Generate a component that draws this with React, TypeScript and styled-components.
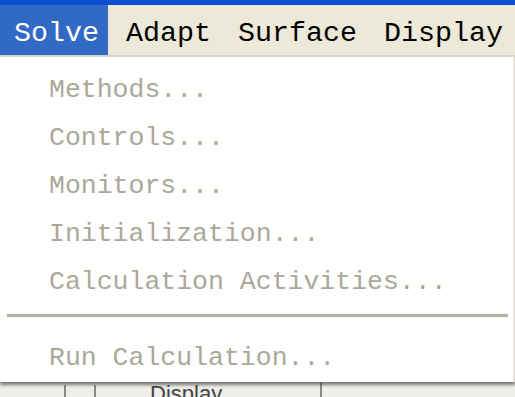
import React from "react";
import styled, { createGlobalStyle } from "styled-components";

const Global = createGlobalStyle`
  html, body { margin: 0; padding: 0; background: #ffffff; overflow: hidden; }
  #root { width: 515px; height: 397px; }
`;

const Page = styled.div`
  width: 515px;
  height: 397px;
  display: flex;
  flex-direction: column;
  overflow: hidden;
  background: #f2f2ee;
`;

const TitleEdge = styled.div`
  height: 5px;
  flex: none;
  background: #0b4fd1;
`;

const MenuBar = styled.div`
  height: 50px;
  flex: none;
  display: flex;
  align-items: stretch;
  background: #ece9d8;
  border-bottom: 2px solid #d8d5c8;
`;

const MenuItem = styled.div<{ $active?: boolean }>`
  display: flex;
  align-items: center;
  padding: 8px 9px 0 14px;
  margin-right: 4px;
  font-family: "Liberation Mono", "DejaVu Sans Mono", monospace;
  font-size: 28.33px;
  line-height: 1;
  color: ${(p) => (p.$active ? "#ffffff" : "#000000")};
  background: ${(p) => (p.$active ? "#316ac5" : "transparent")};
`;

const Dropdown = styled.div`
  flex: none;
  position: relative;
  z-index: 2;
  height: 325px;
  box-sizing: border-box;
  padding: 9px 0 0 0;
  background: #ffffff;
  border-right: 2px solid #e4e2da;
  box-shadow: 0 3px 3px rgba(60, 60, 60, 0.65);
  display: flex;
  flex-direction: column;
`;

const Item = styled.div`
  height: 48px;
  display: flex;
  align-items: center;
  padding-left: 49px;
  font-family: "Liberation Mono", "DejaVu Sans Mono", monospace;
  font-size: 26.5px;
  line-height: 1;
  color: #aba898;
  white-space: pre;
`;

const Separator = styled.div`
  height: 3px;
  margin: 8px 5px 16px 7px;
  background: #b4b2a6;
  border-bottom: 1px solid #f4f4f0;
`;

const Behind = styled.div`
  flex: 1;
  display: flex;
  align-items: flex-start;
  overflow: hidden;
  background: #eeeeea;
`;

const CheckBox = styled.div`
  flex: none;
  width: 32px;
  height: 30px;
  margin: 3px 0 0 64px;
  box-sizing: border-box;
  border-left: 2px solid #8a8a80;
  border-right: 2px solid #8a8a80;
`;

const BehindLabel = styled.div`
  flex: none;
  width: 170px;
  margin: 0 0 0 54px;
  padding-top: 1px;
  font-family: "Liberation Sans", Arial, sans-serif;
  font-size: 22px;
  line-height: 1;
  color: #444444;
  border-right: 2px solid #8a8a80;
  height: 30px;
`;

const menus = ["Solve", "Adapt", "Surface", "Display"];
const items = [
  "Methods...",
  "Controls...",
  "Monitors...",
  "Initialization...",
  "Calculation Activities...",
];

export default function App() {
  return (
    <>
      <Global />
      <Page>
        <TitleEdge />
        <MenuBar>
          {menus.map((m, i) => (
            <MenuItem key={m} $active={i === 0}>
              {m}
            </MenuItem>
          ))}
        </MenuBar>
        <Dropdown>
          {items.map((t) => (
            <Item key={t}>{t}</Item>
          ))}
          <Separator />
          <Item>Run Calculation...</Item>
        </Dropdown>
        <Behind>
          <CheckBox />
          <BehindLabel>Display</BehindLabel>
        </Behind>
      </Page>
    </>
  );
}
